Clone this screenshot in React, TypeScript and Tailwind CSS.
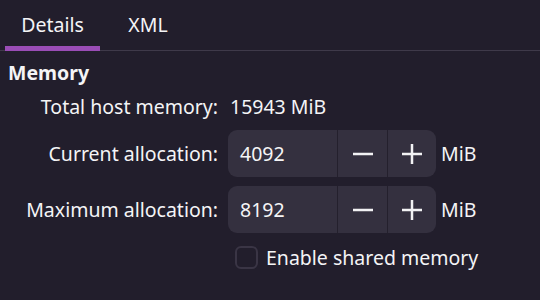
import { useState } from "react";

const font = { fontFamily: '"Noto Sans", "Open Sans", sans-serif' };

const Minus = () => (
  <svg width="22" height="22" viewBox="0 0 22 22">
    <path d="M1 11h20" stroke="#f2f2f4" strokeWidth="2.5" />
  </svg>
);

const Plus = () => (
  <svg width="22" height="22" viewBox="0 0 22 22">
    <path d="M1 11h20M11 1v20" stroke="#f2f2f4" strokeWidth="2.5" />
  </svg>
);

const Spin = ({ value }: { value: number }) => {
  return (
    <div className="flex items-center gap-[5px]">
      <div className="flex h-[47px] w-[208px] overflow-hidden rounded-[9px] bg-[#34303f]">
        <div className="flex w-[109px] items-center pl-[12px] text-[19.5px] text-[#f4f4f6]">
          {value}
        </div>
        <div className="flex w-[50px] items-center justify-center border-l border-[#24202d]">
          <Minus />
        </div>
        <div className="flex flex-1 items-center justify-center border-l border-[#24202d]">
          <Plus />
        </div>
      </div>
      <span className="text-[19.5px] text-[#f4f4f6]">MiB</span>
    </div>
  );
};

export default function App() {
  const [tab] = useState("Details");

  return (
    <div className="h-[300px] w-[540px] overflow-hidden bg-[#221e2c] text-[#f4f4f6]" style={font}>
      <div className="relative flex h-[51px] border-b border-[#3f3a4a] pl-[5px]">
        {["Details", "XML"].map((t) => (
          <div
            key={t}
            className={`relative flex items-center justify-center pb-[1px] text-[19.5px] ${
              t === "Details" ? "w-[95px]" : "w-[96px]"
            }`}
          >
            {t}
            {t === tab && (
              <div className="absolute bottom-[-1px] left-0 right-0 h-[5px] bg-[#9a4db6]" />
            )}
          </div>
        ))}
      </div>

      <div className="pl-[8px]">
        <h2 className="mt-[9px] text-[19.5px] font-bold leading-[26px]">Memory</h2>

        <div className="mt-[8px] grid grid-cols-[220px_auto] items-center">
          <div className="pr-[10px] text-right text-[19.5px] leading-[26px]">Total host memory:</div>
          <div className="pl-[2px] text-[19.5px] leading-[26px]">15943 MiB</div>

          <div className="mt-[10px] pr-[10px] text-right text-[19.5px]">Current allocation:</div>
          <div className="mt-[10px]">
            <Spin value={4092} />
          </div>

          <div className="mt-[9px] pr-[10px] text-right text-[19.5px]">Maximum allocation:</div>
          <div className="mt-[9px]">
            <Spin value={8192} />
          </div>

          <div />
          <label className="mt-[10px] flex items-center gap-[8px] pl-[7px] text-[19.5px]">
            <span className="h-[23px] w-[23px] rounded-[6px] border-2 border-[#3a3545]" />
            Enable shared memory
          </label>
        </div>
      </div>
    </div>
  );
}
